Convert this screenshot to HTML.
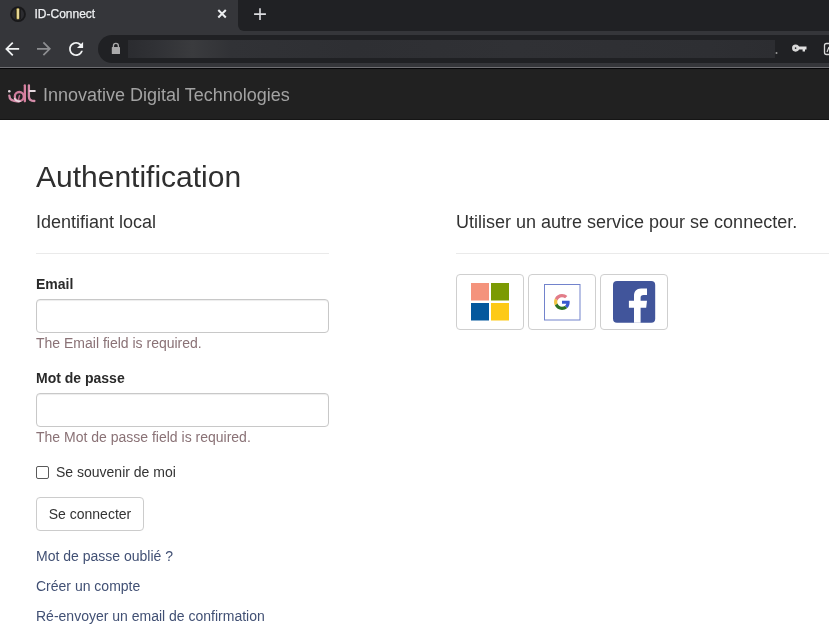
<!DOCTYPE html>
<html><head><meta charset="utf-8">
<style>
*{box-sizing:border-box;margin:0;padding:0}
html,body{width:829px;height:636px;overflow:hidden;background:#fff}
body{font-family:"Liberation Sans",sans-serif;font-size:14px;line-height:20px;color:#333}
#root{position:absolute;left:0;top:0;width:829px;height:636px;will-change:transform;background:#fff}
.abs{position:absolute}
.ttl{color:#e8eaed;font-size:12px;line-height:14px;white-space:nowrap}
#brand{left:43px;top:85px;font-size:18px;line-height:20px;color:#a3a3a3;white-space:nowrap}
.h2{position:absolute;left:36px;font-size:30px;line-height:33px;color:#2f2f2f;white-space:nowrap}
.h4{position:absolute;font-size:18px;line-height:20px;color:#333;white-space:nowrap}
.hr{position:absolute;height:1px;background:#eaeaea}
.lbl{position:absolute;left:36px;font-weight:bold;white-space:nowrap;color:#2a2a2a}
.inp{position:absolute;left:36px;width:293px;height:34px;border:1px solid #c8c8c8;border-radius:4px;box-shadow:inset 0 1px 1px rgba(0,0,0,.075)}
.err{position:absolute;left:36px;color:#8a7276;white-space:nowrap}
.lnk{position:absolute;left:36px;color:#415074;white-space:nowrap}
.btn{position:absolute;left:36px;width:108px;height:34px;border:1px solid #ccc;border-radius:4px;text-align:center;line-height:32px;color:#333}
.sbtn{position:absolute;top:274px;width:68px;height:56px;border:1px solid #cfcfcf;border-radius:4px}
</style></head><body><div id="root">
<!-- browser chrome -->
<svg class="abs" style="left:0;top:0" width="829" height="68" viewBox="0 0 829 68">
  <rect x="0" y="0" width="829" height="68" fill="#35363a"/>
  <path d="M238 0 H829 V31 H244 A6 6 0 0 1 238 25 Z" fill="#202124"/>
  <rect x="0" y="67" width="829" height="1" fill="#6e6e72"/>
  <!-- favicon -->
  <circle cx="18" cy="14.2" r="7.9" fill="#2c2c30"/>
  <circle cx="18" cy="14.2" r="6.9" fill="none" stroke="#18181a" stroke-width="1.8"/>
  <rect x="15.6" y="9" width="1.2" height="10" fill="#121212"/>
  <rect x="19.4" y="9" width="1.2" height="10" fill="#121212"/>
  <rect x="16.5" y="8.3" width="2.8" height="11" rx="1" fill="#c8b04e"/>
  <rect x="17.3" y="9" width="1.4" height="9.6" fill="#efe6b4"/>
  <!-- close x -->
  <path d="M218.3 10 L225.8 17.5 M225.8 10 L218.3 17.5" stroke="#eceef0" stroke-width="2"/>
  <!-- plus -->
  <path d="M260 8.2 V20 M254.1 14.1 H265.9" stroke="#dcdde0" stroke-width="1.6"/>
  <!-- back -->
  <g transform="translate(1.65 38.4) scale(0.875)"><path d="M20 11H7.83l5.59-5.59L12 4l-8 8 8 8 1.41-1.41L7.83 13H20v-2z" fill="#f1f3f4"/></g>
  <!-- forward -->
  <g transform="translate(33.5 38.3) scale(0.875)"><path d="M12 4l-1.41 1.41L16.17 11H4v2h12.17l-5.58 5.59L12 20l8-8z" fill="#8d8e91"/></g>
  <!-- reload -->
  <g transform="translate(65.6 38.4) scale(0.875)"><path d="M17.65 6.35C16.2 4.9 14.21 4 12 4c-4.42 0-7.99 3.58-7.99 8s3.57 8 7.99 8c3.73 0 6.84-2.55 7.73-6h-2.08c-.82 2.33-3.04 4-5.65 4-3.31 0-6-2.69-6-6s2.69-6 6-6c1.66 0 3.14.69 4.22 1.78L13 11h7V4l-2.35 2.35z" fill="#f1f3f4"/></g>
  <!-- omnibox -->
  <rect x="98" y="35" width="800" height="28" rx="14" fill="#202124"/>
  <rect x="128" y="40" width="647" height="18" fill="url(#bl)"/>
  <defs>
    <linearGradient id="bl" x1="0" x2="1" y1="0" y2="0">
      <stop offset="0" stop-color="#2b2c30"/>
      <stop offset="0.04" stop-color="#303135"/>
      <stop offset="0.10" stop-color="#3a3b3e"/>
      <stop offset="0.16" stop-color="#313236"/>
      <stop offset="0.35" stop-color="#2e2f33"/>
      <stop offset="0.6" stop-color="#303135"/>
      <stop offset="0.9" stop-color="#2e2f33"/>
      <stop offset="1" stop-color="#2c2d31"/>
    </linearGradient>
  </defs>
  <!-- lock -->
  <rect x="111.8" y="47.1" width="8.2" height="6.9" rx="0.6" fill="#aaaaab"/>
  <path d="M113.4 47.5 V45.9 A2.5 2.6 0 0 1 118.4 45.9 V47.5" stroke="#aaaaab" stroke-width="1.3" fill="none"/>
  <circle cx="776.5" cy="53" r="1" fill="#9a9a9a"/>
  <!-- key -->
  <circle cx="795.6" cy="48.1" r="2.2" stroke="#d8d8d8" stroke-width="2.7" fill="none"/>
  <path d="M798 46.6 H806.5 V49.6 H805 V51.4 H802.6 V49.6 H798 Z" fill="#e0e0e0"/>
  <!-- right icon -->
  <rect x="824.5" y="43.5" width="10" height="11" rx="2" stroke="#d8d8d8" stroke-width="1.3" fill="none"/>
  <path d="M827 52 L829 47" stroke="#d8d8d8" stroke-width="1.2"/>
  <text x="34.5" y="17.6" font-family="Liberation Sans" font-size="12" fill="#eef0f2" stroke="#eef0f2" stroke-width="0.25">ID-Connect</text>
</svg>

<!-- header -->
<div class="abs" style="left:0;top:68px;width:829px;height:52px;background:#212121;border-top:1px solid #060608;border-bottom:1px solid #151515"></div>
<svg class="abs" style="left:0;top:80px" width="42" height="28" viewBox="0 80 42 28">
  <g fill="none" stroke-linecap="round">
    <circle cx="19.3" cy="96.5" r="4.5" stroke="#cf7d9c" stroke-width="2.3"/>
    <path d="M9.3 95.6 C9.3 99.8 12.5 101.5 18.5 101.5" stroke="#d38aa6" stroke-width="2.3"/>
    <path d="M24.85 85.3 V101.3" stroke="#d7809f" stroke-width="2.3"/>
    <path d="M28.9 85.3 V96.5 C28.9 99.8 30.8 101 34.4 101" stroke="#d48ba8" stroke-width="2.3"/>
    <path d="M30 91 H34.8" stroke="#e6dadf" stroke-width="2"/>
    <path d="M19.5 95.6 L18.4 99.7" stroke="#b86a88" stroke-width="1.5"/>
    <path d="M14.6 98.5 C15.5 100.6 17.5 101.5 20 101.3" stroke="#eadce2" stroke-width="1.6"/>
  </g>
  <circle cx="9.3" cy="91.2" r="1.3" fill="#e0d4da"/>
</svg>
<div id="brand" class="abs">Innovative Digital Technologies</div>

<!-- content -->
<div class="h2" style="top:160px">Authentification</div>
<div class="h4" style="left:36px;top:212px">Identifiant local</div>
<div class="hr" style="left:36px;top:253px;width:293px"></div>
<div class="lbl" style="top:274px">Email</div>
<div class="inp" style="top:299px"></div>
<div class="err" style="top:333px">The Email field is required.</div>
<div class="lbl" style="top:368px">Mot de passe</div>
<div class="inp" style="top:393px"></div>
<div class="err" style="top:427px">The Mot de passe field is required.</div>
<div class="abs" style="left:36px;top:466px;width:13px;height:13px;border:1px solid #5a5a5a;border-radius:2px"></div>
<div class="abs" style="left:56px;top:462px;white-space:nowrap">Se souvenir de moi</div>
<div class="btn" style="top:497px">Se connecter</div>
<div class="lnk" style="top:546px">Mot de passe oublié ?</div>
<div class="lnk" style="top:576px">Créer un compte</div>
<div class="lnk" style="top:606px">Ré-envoyer un email de confirmation</div>

<div class="h4" style="left:456px;top:212px">Utiliser un autre service pour se connecter.</div>
<div class="hr" style="left:456px;top:253px;width:400px"></div>
<div class="sbtn" style="left:456px"></div>
<div class="sbtn" style="left:528px"></div>
<div class="sbtn" style="left:600px"></div>
<svg class="abs" style="left:456px;top:274px" width="220" height="56" viewBox="456 274 220 56">
  <!-- microsoft -->
  <rect x="471" y="283" width="18" height="17.5" fill="#f4937c"/>
  <rect x="491" y="283" width="18" height="17.5" fill="#7b9a03"/>
  <rect x="471" y="303" width="18" height="17.5" fill="#04589d"/>
  <rect x="491" y="303" width="18" height="17.5" fill="#fdca17"/>
  <!-- google -->
  <rect x="544.5" y="284.5" width="35.5" height="35.5" fill="none" stroke="#7283cc" stroke-width="1"/>
  <g transform="translate(554 294) scale(0.3333)">
    <path fill="#e27c88" d="M24 9.5c3.54 0 6.71 1.22 9.21 3.6l6.85-6.85C35.9 2.38 30.47 0 24 0 14.62 0 6.51 5.38 2.56 13.22l7.98 6.19C12.43 13.72 17.74 9.5 24 9.5z"/>
    <path fill="#3a5ad0" d="M46.98 24.55c0-1.57-.15-3.09-.38-4.55H24v9.02h12.94c-.58 2.96-2.26 5.48-4.78 7.18l7.73 6c4.51-4.18 7.09-10.36 7.09-17.65z"/>
    <path fill="#f0c443" d="M10.53 28.59c-.48-1.45-.76-2.99-.76-4.59s.27-3.14.76-4.59l-7.98-6.19C.92 16.46 0 20.12 0 24c0 3.88.92 7.54 2.56 10.78l7.97-6.19z"/>
    <path fill="#2d7124" d="M24 48c6.48 0 11.93-2.13 15.89-5.81l-7.73-6c-2.15 1.45-4.92 2.3-8.16 2.3-6.26 0-11.57-4.22-13.47-9.91l-7.98 6.19C6.51 42.62 14.62 48 24 48z"/>
  </g>
  <!-- facebook -->
  <rect x="613" y="281" width="42.2" height="41.8" rx="4" fill="#41559b"/>
  <path d="M634 322.8 V307.8 H628.9 V300.7 H634 V296 C634 291.5 636.5 288.6 641 288.6 H647 V295 H643.5 C641.5 295 640.6 295.8 640.6 297.8 V300.7 H647 L646.2 307.8 H640.6 V322.8 Z" fill="#fff"/>
</svg>
</div></body></html>
